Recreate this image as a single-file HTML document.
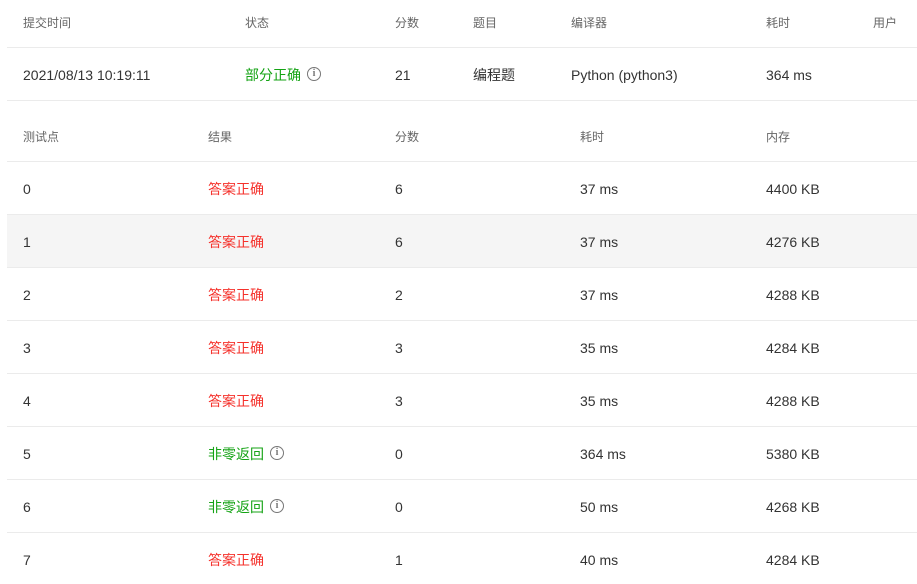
<!DOCTYPE html>
<html><head><meta charset="utf-8"><style>
body{margin:0;width:917px;height:584px;background:#fff;overflow:hidden;position:relative;font-family:"Liberation Sans","Noto Sans CJK SC",sans-serif;font-size:14px;color:#333}
.t{position:absolute;line-height:16px;white-space:nowrap}
.h{color:#666;font-size:12px}
.ln{position:absolute;left:7px;right:0;height:1px;background:#ebebeb}
.bg{position:absolute;left:7px;right:0;background:#f5f5f5}
.r{color:#f5312b}.g{color:#14a314}
.i{display:inline-block;width:14px;height:14px;border:1.4px solid #777;border-radius:50%;box-sizing:border-box;vertical-align:top;margin-top:0px;margin-left:6px;position:relative;font-size:10px;line-height:11px;text-align:center;color:#777;font-weight:bold;font-family:"Liberation Serif",serif}
</style></head><body>
<div class="bg" style="top:215px;height:52px"></div>
<div class="ln" style="top:47px"></div>
<div class="ln" style="top:100px"></div>
<div class="ln" style="top:161px"></div>
<div class="ln" style="top:214px"></div>
<div class="ln" style="top:267px"></div>
<div class="ln" style="top:320px"></div>
<div class="ln" style="top:373px"></div>
<div class="ln" style="top:426px"></div>
<div class="ln" style="top:479px"></div>
<div class="ln" style="top:532px"></div>

<div class="t h" style="left:23px;top:15px">提交时间</div>
<div class="t h" style="left:245px;top:15px">状态</div>
<div class="t h" style="left:395px;top:15px">分数</div>
<div class="t h" style="left:473px;top:15px">题目</div>
<div class="t h" style="left:571px;top:15px">编译器</div>
<div class="t h" style="left:766px;top:15px">耗时</div>
<div class="t h" style="left:873px;top:15px">用户</div>

<div class="t" style="left:23px;top:67px">2021/08/13 10:19:11</div>
<div class="t g" style="left:245px;top:67px">部分正确<span class="i">i</span></div>
<div class="t" style="left:395px;top:67px">21</div>
<div class="t" style="left:473px;top:67px">编程题</div>
<div class="t" style="left:571px;top:67px">Python (python3)</div>
<div class="t" style="left:766px;top:67px">364 ms</div>

<div class="t h" style="left:23px;top:129px">测试点</div>
<div class="t h" style="left:208px;top:129px">结果</div>
<div class="t h" style="left:395px;top:129px">分数</div>
<div class="t h" style="left:580px;top:129px">耗时</div>
<div class="t h" style="left:766px;top:129px">内存</div>

<div class="t" style="left:23px;top:181px">0</div><div class="t r" style="left:208px;top:181px">答案正确</div><div class="t" style="left:395px;top:181px">6</div><div class="t" style="left:580px;top:181px">37 ms</div><div class="t" style="left:766px;top:181px">4400 KB</div>
<div class="t" style="left:23px;top:234px">1</div><div class="t r" style="left:208px;top:234px">答案正确</div><div class="t" style="left:395px;top:234px">6</div><div class="t" style="left:580px;top:234px">37 ms</div><div class="t" style="left:766px;top:234px">4276 KB</div>
<div class="t" style="left:23px;top:287px">2</div><div class="t r" style="left:208px;top:287px">答案正确</div><div class="t" style="left:395px;top:287px">2</div><div class="t" style="left:580px;top:287px">37 ms</div><div class="t" style="left:766px;top:287px">4288 KB</div>
<div class="t" style="left:23px;top:340px">3</div><div class="t r" style="left:208px;top:340px">答案正确</div><div class="t" style="left:395px;top:340px">3</div><div class="t" style="left:580px;top:340px">35 ms</div><div class="t" style="left:766px;top:340px">4284 KB</div>
<div class="t" style="left:23px;top:393px">4</div><div class="t r" style="left:208px;top:393px">答案正确</div><div class="t" style="left:395px;top:393px">3</div><div class="t" style="left:580px;top:393px">35 ms</div><div class="t" style="left:766px;top:393px">4288 KB</div>
<div class="t" style="left:23px;top:446px">5</div><div class="t g" style="left:208px;top:446px">非零返回<span class="i">i</span></div><div class="t" style="left:395px;top:446px">0</div><div class="t" style="left:580px;top:446px">364 ms</div><div class="t" style="left:766px;top:446px">5380 KB</div>
<div class="t" style="left:23px;top:499px">6</div><div class="t g" style="left:208px;top:499px">非零返回<span class="i">i</span></div><div class="t" style="left:395px;top:499px">0</div><div class="t" style="left:580px;top:499px">50 ms</div><div class="t" style="left:766px;top:499px">4268 KB</div>
<div class="t" style="left:23px;top:552px">7</div><div class="t r" style="left:208px;top:552px">答案正确</div><div class="t" style="left:395px;top:552px">1</div><div class="t" style="left:580px;top:552px">40 ms</div><div class="t" style="left:766px;top:552px">4284 KB</div>
</body></html>
